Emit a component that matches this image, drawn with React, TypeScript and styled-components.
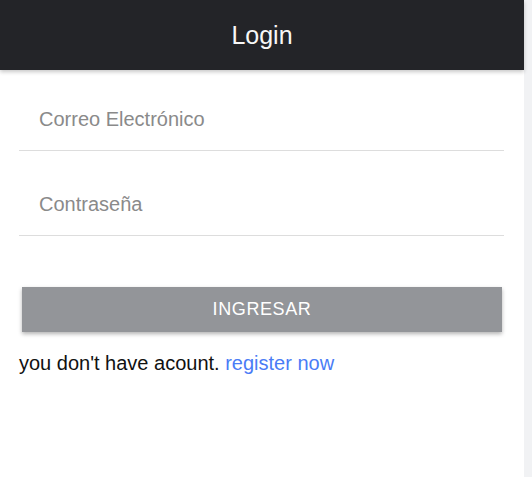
import React from "react";
import styled, { createGlobalStyle } from "styled-components";

const Global = createGlobalStyle`
  html, body { margin: 0; padding: 0; background: #ffffff; }
  body { font-family: "Liberation Sans", Arial, sans-serif; }
  * { box-sizing: border-box; }
`;

const Page = styled.div`
  display: flex;
  width: 532px;
  height: 477px;
  overflow: hidden;
`;

const Main = styled.div`
  flex: 1;
  display: flex;
  flex-direction: column;
  background: #ffffff;
`;

const Track = styled.div`
  width: 8px;
  background: #f1f2f4;
`;

const Header = styled.header`
  height: 70px;
  background: #232428;
  display: flex;
  align-items: center;
  justify-content: center;
  box-shadow: 0 2px 4px rgba(0, 0, 0, 0.22);
  position: relative;
  z-index: 1;
`;

const Title = styled.h1`
  margin: 0;
  font-family: "Liberation Sans", Arial, sans-serif;
  font-weight: 400;
  font-size: 25px;
  color: #f7f7f7;
  padding-top: 1px;
`;

const Form = styled.form`
  display: flex;
  flex-direction: column;
  padding: 20px 20px 0 19px;
`;

const Fields = styled.div`
  display: flex;
  flex-direction: column;
  gap: 24px;
`;

const Field = styled.input`
  height: 61px;
  border: none;
  border-bottom: 1px solid #dddddd;
  padding: 0 0 1px 20px;
  font-family: "Liberation Sans", Arial, sans-serif;
  font-size: 20px;
  color: #222;
  outline: none;
  background: transparent;
  &::placeholder { color: #8a8a8a; }
`;

const Button = styled.button`
  margin: 51px 2px 0 3px;
  height: 45px;
  border: none;
  background: #939599;
  color: #ffffff;
  font-family: "Liberation Sans", Arial, sans-serif;
  font-size: 18px;
  letter-spacing: 0.6px;
  text-transform: uppercase;
  box-shadow: 0 2px 4px rgba(0, 0, 0, 0.3);
  cursor: pointer;
`;

const Footer = styled.p`
  margin: 20px 0 0 0;
  font-family: "Liberation Sans", Arial, sans-serif;
  font-size: 20px;
  color: #111;
`;

const Link = styled.a`
  color: #4a7cf6;
  text-decoration: none;
`;

export default function App() {
  return (
    <>
      <Global />
      <Page>
        <Main>
          <Header>
            <Title>Login</Title>
          </Header>
          <Form onSubmit={(e) => e.preventDefault()}>
            <Fields>
              <Field type="email" placeholder="Correo Electrónico" />
              <Field type="password" placeholder="Contraseña" />
            </Fields>
            <Button type="submit">Ingresar</Button>
            <Footer>
              you don't have acount. <Link href="#">register now</Link>
            </Footer>
          </Form>
        </Main>
        <Track />
      </Page>
    </>
  );
}
